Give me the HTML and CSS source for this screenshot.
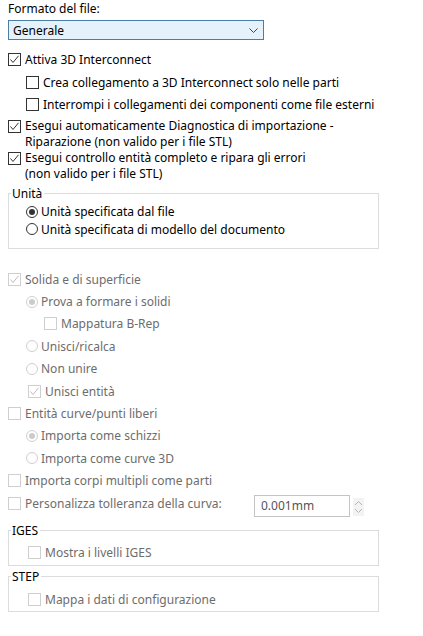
FILE: index.html
```html
<!DOCTYPE html>
<html lang="it">
<head>
<meta charset="utf-8">
<link rel="stylesheet" href="styles.css">
</head>
<body>
<div class="page">
  <div class="label">Formato del file:</div>
  <div class="select">
    <span>Generale</span>
    <svg class="chev" width="9" height="5" viewBox="0 0 9 5"><polyline points="0.5,0.5 4.5,4.5 8.5,0.5" fill="none" stroke="#444" stroke-width="1"/></svg>
  </div>

  <div class="row first">
    <span class="cb"><svg viewBox="0 0 13 13"><polyline points="2.5,6.5 5,9.5 10.5,2.8" fill="none" stroke="#333" stroke-width="1"/></svg></span>
    <span class="txt">Attiva 3D Interconnect</span>
  </div>
  <div class="row ind1 r2">
    <span class="cb"></span>
    <span class="txt">Crea collegamento a 3D Interconnect solo nelle parti</span>
  </div>
  <div class="row ind1">
    <span class="cb"></span>
    <span class="txt">Interrompi i collegamenti dei componenti come file esterni</span>
  </div>
  <div class="row multi r4">
    <span class="cb"><svg viewBox="0 0 13 13"><polyline points="2.5,6.5 5,9.5 10.5,2.8" fill="none" stroke="#333" stroke-width="1"/></svg></span>
    <span class="txt">Esegui automaticamente Diagnostica di importazione -<br>Riparazione (non valido per i file STL)</span>
  </div>
  <div class="row multi">
    <span class="cb"><svg viewBox="0 0 13 13"><polyline points="2.5,6.5 5,9.5 10.5,2.8" fill="none" stroke="#333" stroke-width="1"/></svg></span>
    <span class="txt">Esegui controllo entità completo e ripara gli errori<br>(non valido per i file STL)</span>
  </div>

  <fieldset class="group units">
    <legend>Unità</legend>
    <div class="rrow"><span class="rb on"></span><span class="txt">Unità specificata dal file</span></div>
    <div class="rrow"><span class="rb"></span><span class="txt">Unità specificata di modello del documento</span></div>
  </fieldset>

  <div class="dis">
    <div class="drow top">
      <span class="cb"><svg viewBox="0 0 13 13"><polyline points="2.5,6.5 5,9.5 10.5,2.8" fill="none" stroke="#bdbdbd" stroke-width="1"/></svg></span>
      <span class="txt">Solida e di superficie</span>
    </div>
    <div class="drow ind-r">
      <span class="rb on"></span><span class="txt">Prova a formare i solidi</span>
    </div>
    <div class="drow ind2">
      <span class="cb"></span><span class="txt">Mappatura B-Rep</span>
    </div>
    <div class="drow ind-r">
      <span class="rb"></span><span class="txt">Unisci/ricalca</span>
    </div>
    <div class="drow ind-r">
      <span class="rb"></span><span class="txt">Non unire</span>
    </div>
    <div class="drow ind-c">
      <span class="cb"><svg viewBox="0 0 13 13"><polyline points="2.5,6.5 5,9.5 10.5,2.8" fill="none" stroke="#bdbdbd" stroke-width="1"/></svg></span>
      <span class="txt">Unisci entità</span>
    </div>
    <div class="drow">
      <span class="cb"></span><span class="txt">Entità curve/punti liberi</span>
    </div>
    <div class="drow ind-r">
      <span class="rb on"></span><span class="txt">Importa come schizzi</span>
    </div>
    <div class="drow ind-r">
      <span class="rb"></span><span class="txt">Importa come curve 3D</span>
    </div>
    <div class="drow">
      <span class="cb"></span><span class="txt">Importa corpi multipli come parti</span>
    </div>
    <div class="drow tol">
      <span class="cb"></span><span class="txt grow">Personalizza tolleranza della curva:</span>
      <span class="input">0.001mm</span>
      <span class="spin">
        <svg width="9" height="18" viewBox="0 0 9 18"><polyline points="1,7 4.5,3.5 8,7" fill="none" stroke="#b5b5b5"/><polyline points="1,11 4.5,14.5 8,11" fill="none" stroke="#b5b5b5"/></svg>
      </span>
    </div>

    <fieldset class="group iges">
      <legend>IGES</legend>
      <div class="grow-row"><span class="cb"></span><span class="txt">Mostra i livelli IGES</span></div>
    </fieldset>
    <fieldset class="group step">
      <legend>STEP</legend>
      <div class="grow-row"><span class="cb"></span><span class="txt">Mappa i dati di configurazione</span></div>
    </fieldset>
  </div>
</div>
</body>
</html>
```

FILE: styles.css
```css
* { box-sizing: border-box; }
html, body { margin: 0; padding: 0; background: #ffffff; }
body {
  font-family: "Noto Sans", "Open Sans", "DejaVu Sans", sans-serif;
  font-size: 12px;
  color: #000;
}
.page { padding: 1px 0 0 8px; width: 423px; }
.label { line-height: 16px; height: 16px; }
.select {
  margin-top: 3px;
  width: 256px;
  height: 20px;
  border: 1px solid #4a7ea6;
  background: #e5f1fb;
  display: flex;
  align-items: center;
  justify-content: space-between;
  padding: 0 5px 0 4px;
}
.chev { display: block; }

.row { display: flex; align-items: center; height: 22px; }
.row.first { margin-top: 8px; }
.row.r2 { margin-top: 1px; }
.row.r4 { margin-top: 3px; }
.row.multi { align-items: flex-start; height: 32px; padding-top: 0; line-height: 16px; }
.row.multi .cb { margin-top: 2px; }
.ind1 { padding-left: 18px; }

.cb {
  width: 13px; height: 13px; flex: none;
  border: 1px solid #333;
  background: #fff;
  margin-right: 4px;
  position: relative;
}
.cb svg { position: absolute; left: -1px; top: -1px; width: 13px; height: 13px; }
.txt { white-space: nowrap; }

.rb {
  width: 12px; height: 12px; flex: none;
  border: 1px solid #333;
  border-radius: 50%;
  margin-right: 3px;
  display: flex; align-items: center; justify-content: center;
  background: #fff;
}
.rb.on::after {
  content: ""; width: 6px; height: 6px; border-radius: 50%; background: #333;
}

.group {
  margin: 0;
  padding: 0;
  border: 1px solid #dcdcdc;
  width: 371px;
  min-width: 0;
}
.group legend { padding: 0 2px 0 1px; margin-left: 2px; line-height: 15px; color: #000; }
.units { margin-top: 4px; padding-top: 2px; padding-bottom: 10px; }
.rrow { display: flex; align-items: center; height: 17.5px; padding-left: 17px; }

.dis { color: #6d6d6d; }
.dis .cb { border-color: #cfcfcf; }
.dis .rb { border-color: #cfcfcf; }
.dis .rb.on::after { background: #cbcbcb; }
.drow { display: flex; align-items: center; height: 22.4px; }
.drow.top { margin-top: 19px; }
.ind-r { padding-left: 18px; }
.ind-c { padding-left: 20px; }
.ind2 { padding-left: 36px; }
.grow { width: 229px; }
.input {
  width: 96px; height: 22px;
  border: 1px solid #c4c4c4;
  margin-top: 5px;
  padding-left: 6px;
  line-height: 20px;
  color: #555;
}
.spin {
  width: 11px; height: 18px;
  margin-left: 3px; margin-top: 7px;
  background: #f3f3f3;
  display: flex; align-items: center; justify-content: center;
}
.iges { margin-top: 9px; padding-top: 5px; padding-bottom: 4px; }
.step { margin-top: 3px; padding-top: 6px; padding-bottom: 3px; }
.grow-row { display: flex; align-items: center; height: 18px; padding-left: 19px; }
```
